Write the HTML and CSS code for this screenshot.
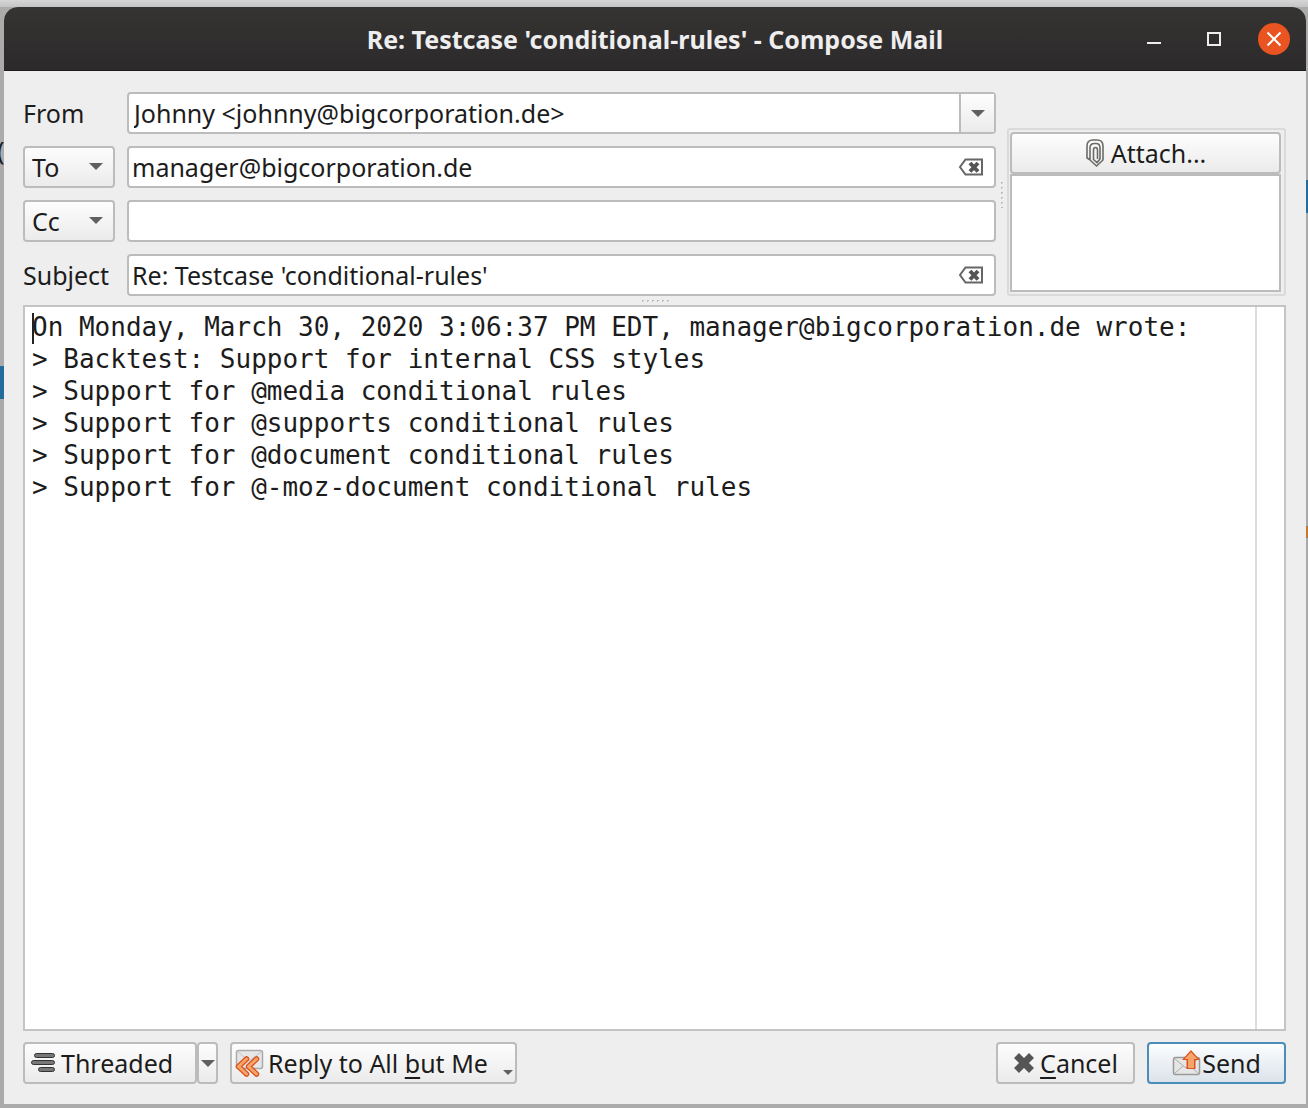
FILE: index.html
```html
<!DOCTYPE html>
<html lang="en">
<head>
<meta charset="utf-8">
<title>Re: Testcase 'conditional-rules' - Compose Mail</title>
<link rel="stylesheet" href="styles.css">
</head>
<body>
<span class="behind">(</span>
<main class="window">
  <header class="titlebar">
    <h1 class="title">Re: Testcase 'conditional-rules' - Compose Mail</h1>
    <div class="controls">
      <button class="control" type="button" aria-label="Minimize"><svg width="32" height="32" viewBox="0 0 32 32"><path d="M9 20h14" stroke="#eee" stroke-width="2"/></svg></button>
      <button class="control" type="button" aria-label="Maximize"><svg width="32" height="32" viewBox="0 0 32 32"><path d="M10 10h12v12H10z" fill="none" stroke="#eee" stroke-width="2"/></svg></button>
      <button class="control" type="button" aria-label="Close"><svg width="32" height="32" viewBox="0 0 32 32"><circle cx="16" cy="16" r="16" fill="#e95420"/><path d="M9.500 9.500l13 13M22.500 9.500l-13 13" stroke="#fff" stroke-width="2"/></svg></button>
    </div>
  </header>
  <form class="compose">
    <div class="top">
      <div class="fields">
        <label class="label" for="from">From</label>
        <div class="drop">
          <select class="from" id="from"><option>Johnny &lt;johnny@bigcorporation.de&gt;</option></select>
          <span class="from-arrow"><i class="arrow"></i></span>
        </div>
        <div class="drop">
          <select class="kind" aria-label="First recipient kind"><option>To</option><option>Cc</option></select>
          <i class="arrow kind-arrow"></i>
        </div>
        <div class="field">
          <input type="text" aria-label="To" value="manager@bigcorporation.de">
          <button class="clear" type="button" aria-label="Clear recipient"><svg width="26" height="20" viewBox="0 0 26 20"><path d="M7.500 2.500H24v15H7.500L2 10z" fill="none" stroke="#666" stroke-width="2"/><path d="M12 6l8 8.500M20 6l-8 8.500" stroke="#555" stroke-width="4"/></svg></button>
        </div>
        <div class="drop">
          <select class="kind" aria-label="Second recipient kind"><option>Cc</option><option>To</option></select>
          <i class="arrow kind-arrow"></i>
        </div>
        <div class="field"><input type="text" aria-label="Cc"></div>
        <label class="label" for="subject">Subject</label>
        <div class="field">
          <input type="text" id="subject" value="Re: Testcase 'conditional-rules'">
          <button class="clear" type="button" aria-label="Clear subject"><svg width="26" height="20" viewBox="0 0 26 20"><path d="M7.500 2.500H24v15H7.500L2 10z" fill="none" stroke="#666" stroke-width="2"/><path d="M12 6l8 8.500M20 6l-8 8.500" stroke="#555" stroke-width="4"/></svg></button>
        </div>
      </div>
      <div class="grip-v"></div>
      <section class="attachments" aria-label="Attachments">
        <button class="button attach" type="button">
          <svg width="20" height="30" viewBox="0 0 20 30" fill="none" stroke="#6b6b68" stroke-width="1.600"><path d="M4.500 21.500L2 20V8q0-6 6-6h4q6 0 6 6v14l-6.500 6L5 22V10q0-4.500 4.500-4.500h1.500q4 0 4 4.500v11l-3 3.500-3.500-3V12q0-2.500 2-2.500t2 2.500v9"/></svg>
          <span>Attach...</span>
        </button>
        <div class="list"></div>
      </section>
    </div>
    <div class="grip-h"></div>
    <div class="editor">
      <textarea class="body" aria-label="Message" spellcheck="false">On Monday, March 30, 2020 3:06:37 PM EDT, manager@bigcorporation.de wrote:
&gt; Backtest: Support for internal CSS styles
&gt; Support for @media conditional rules
&gt; Support for @supports conditional rules
&gt; Support for @document conditional rules
&gt; Support for @-moz-document conditional rules</textarea>
      <span class="caret"></span>
    </div>
    <div class="actions">
      <div class="split">
        <button class="button threaded" type="button">
          <svg width="26" height="22" viewBox="0 0 26 22"><g fill="#777" stroke="#333"><rect x="4.500" y="1.500" width="20" height="4" rx="2"/><rect x="1.500" y="8.500" width="23" height="4" rx="2"/><rect x="8.500" y="15.500" width="16" height="4" rx="2"/></g></svg>
          <span>Threaded</span>
        </button>
        <button class="button more" type="button" aria-label="Threading options"><i class="arrow"></i></button>
      </div>
      <button class="button reply" type="button">
        <svg width="30" height="30" viewBox="0 0 30 30"><rect x="2.500" y="2.500" width="26" height="18" rx="2" fill="#e6e6e6" stroke="#aaa" stroke-width="1.500"/><path d="M4 4l11 9L27 4" fill="none" stroke="#c4c4c4"/><g fill="none" stroke-linecap="round" stroke-linejoin="round"><path d="M12.500 11l-8 7.500 8 7.500M22.500 11l-8 7.500 8 7.500" stroke="#d9531e" stroke-width="5.500"/><path d="M12.500 11l-8 7.500 8 7.500M22.500 11l-8 7.500 8 7.500" stroke="#f7a469" stroke-width="3"/></g></svg>
        <span>Reply to All <u>b</u>ut Me</span>
        <i class="arrow small"></i>
      </button>
      <button class="button cancel" type="button">
        <svg width="22" height="22" viewBox="0 0 22 22"><path d="M3.500 3.500l15 15M18.500 3.500l-15 15" stroke="#555" stroke-width="7"/></svg>
        <span><u>C</u>ancel</span>
      </button>
      <button class="button send" type="submit">
        <svg width="30" height="30" viewBox="0 0 30 30"><rect x="1.500" y="9.500" width="26" height="17" rx="2" fill="#e6e6e6" stroke="#999" stroke-width="1.500"/><path d="M3 11l11 9 12-9M3 25l8-7M26 25l-8-7" fill="none" stroke="#aaa"/><path d="M19 2l9 10h-4.500v9h-9v-9H10z" fill="#d9531e"/><path d="M19 4l6.500 7H22v9h-6v-9h-3.500z" fill="#f7a469"/></svg>
        <span>Send</span>
      </button>
    </div>
  </form>
</main>
</body>
</html>
```
FILE: styles.css
```css
* { box-sizing: border-box; }

body {
  margin: 0;
  min-height: 100vh;
  display: flex;
  padding: 7px 2px 4px 4px;
  position: relative;
  overflow: hidden;
  font: 25px/32px "Noto Sans", sans-serif;
  color: #1c1c1c;
  background:
    linear-gradient(#246c9c, #246c9c) 0 366px / 4px 33px no-repeat,
    linear-gradient(#246c9c, #246c9c) right 180px / 2px 33px no-repeat,
    linear-gradient(#c07a2c, #c07a2c) right 526px / 2px 12px no-repeat,
    linear-gradient(#d6d6d6, #c4c4c4) 0 0 / 100% 7px no-repeat,
    #ababab;
}

.behind { position: absolute; left: -3px; top: 134px; }

.window {
  flex: 1;
  display: flex;
  flex-direction: column;
  position: relative;
  background: #eee;
  border-radius: 14px 14px 0 0;
  overflow: hidden;
}

.titlebar {
  display: grid;
  grid-template-columns: 1fr auto 1fr;
  align-items: center;
  height: 64px;
  padding: 0 16px;
  background: linear-gradient(#353432, #2c2a2b);
  border-bottom: 1px solid #1c1b1b;
  color: #eee;
}

.title { grid-column: 2; margin: 0; font-size: 25px; line-height: 32px; font-weight: 700; }
.controls { display: flex; justify-content: flex-end; gap: 28px; }
.control { width: 32px; height: 32px; padding: 0; border: 0; background: none; }
svg { display: block; flex: none; }

.compose { flex: 1; display: flex; flex-direction: column; padding: 21px 20px 20px 19px; }
.top { display: flex; align-items: flex-end; }

.fields {
  flex: 1;
  display: grid;
  grid-template-columns: 92px 1fr;
  gap: 12px;
  align-items: center;
}

.label { white-space: nowrap; }
.drop { position: relative; }

select, input, button, textarea { font: inherit; color: inherit; margin: 0; }

select, .field, .button {
  height: 42px;
  border: 2px solid #bcbcbc;
  border-radius: 4px;
}

select { display: block; appearance: none; width: 100%; padding: 0 5px; background: #fff; }
.kind, .button, .from-arrow { background: linear-gradient(#fdfdfd, #ebebeb); }
.kind { padding: 0 7px; }

.from-arrow {
  position: absolute;
  top: 2px;
  right: 2px;
  bottom: 2px;
  width: 35px;
  display: flex;
  align-items: center;
  justify-content: center;
  border-left: 2px solid #bcbcbc;
  pointer-events: none;
}

.arrow {
  flex: none;
  width: 0;
  height: 0;
  border: 7px solid transparent;
  border-top-color: #606060;
  border-bottom: 0;
}
.kind-arrow { position: absolute; right: 12px; top: 17px; pointer-events: none; }
.small { border-width: 5px 5px 0; }

.field { display: flex; align-items: center; background: #fff; padding: 0 10px 0 3px; }
.field input { flex: 1; min-width: 0; height: 38px; padding: 0; border: 0; outline: 0; background: none; }
.clear { padding: 0; border: 0; background: none; }

.grip-v {
  align-self: center;
  width: 11px;
  height: 28px;
  background: radial-gradient(circle, #bbb 1px, transparent 1px) 3px 0 / 5px 5px repeat-y;
}
.grip-h {
  align-self: center;
  width: 30px;
  height: 9px;
  background: radial-gradient(circle, #bbb 1px, transparent 1px) 0 2px / 5px 5px repeat-x;
}

.attachments {
  width: 279px;
  height: 168px;
  display: flex;
  flex-direction: column;
  padding: 2px 3px 2px 1px;
  border: 2px solid #dadada;
  border-radius: 3px;
}
.list { flex: 1; border: 2px solid #bcbcbc; background: #fff; }

.button { display: flex; align-items: center; padding: 0 5px; white-space: nowrap; }
.attach { justify-content: center; gap: 6px; }

.editor {
  flex: 1;
  display: flex;
  position: relative;
  border: 2px solid #c4c4c4;
  background: linear-gradient(#dcdcdc, #dcdcdc) right 27px top 0 / 2px 100% no-repeat #fff;
}
.body {
  flex: 1;
  resize: none;
  border: 0;
  outline: 0;
  padding: 4px 30px 4px 7px;
  background: none;
  font: 26px/32px "DejaVu Sans Mono", monospace;
}
.caret { position: absolute; left: 7px; top: 6px; width: 2px; height: 31px; background: #222; }

.actions { display: flex; gap: 12px; padding-top: 11px; }
.split { display: flex; }
.threaded { width: 174px; gap: 5px; }
.more { width: 21px; padding: 0; justify-content: center; }
.reply { width: 287px; gap: 4px; padding: 0 2px; }
.reply .small { margin: 18px 0 0 auto; }
.cancel { width: 139px; margin-left: auto; justify-content: center; gap: 5px; }
.send { width: 139px; justify-content: center; border-color: #4a8db8; background: linear-gradient(#fcfdfe, #dbe3ea); }
u { text-decoration-thickness: 2px; text-underline-offset: 4px; }
```
